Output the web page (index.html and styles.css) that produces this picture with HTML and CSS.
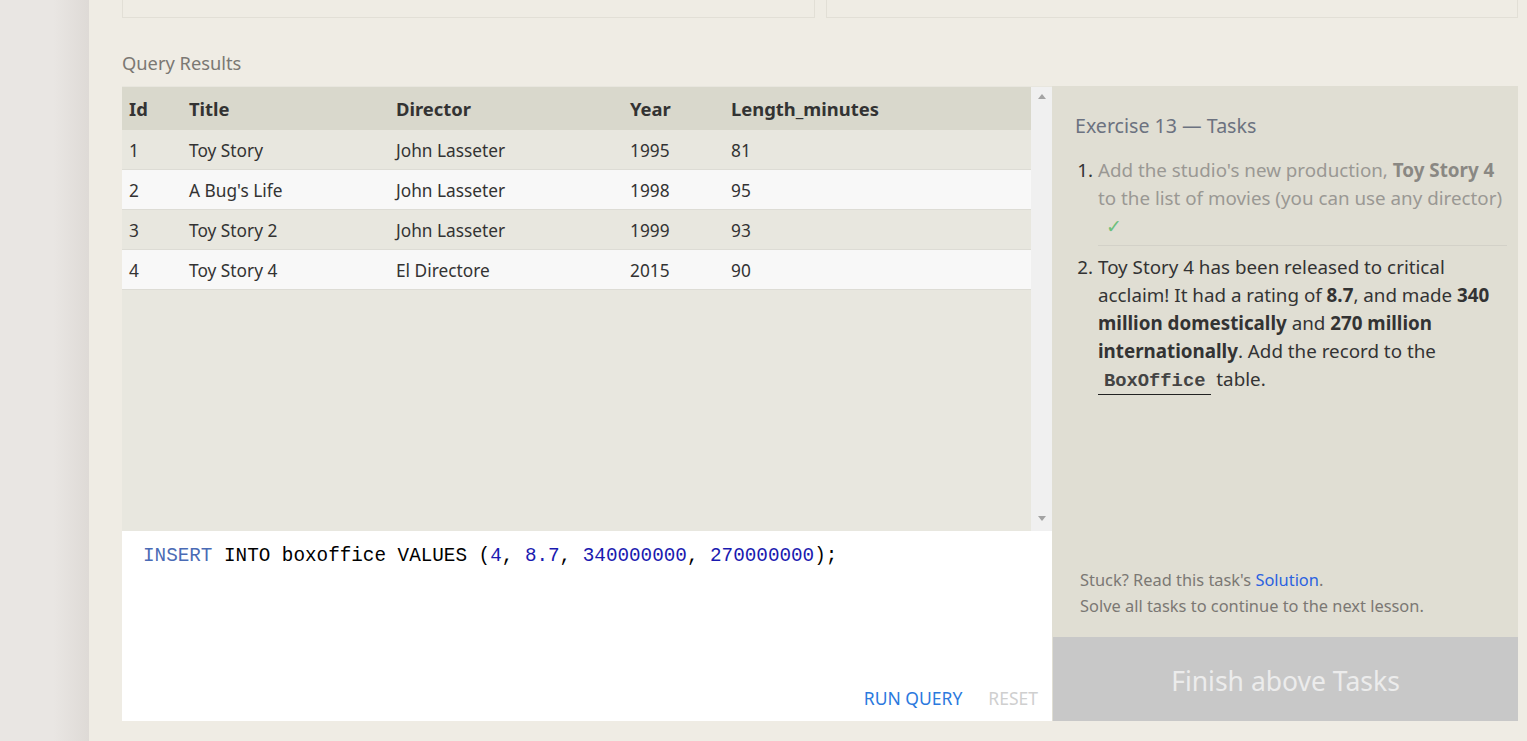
FILE: index.html
```html
<!DOCTYPE html>
<html>
<head>
<meta charset="utf-8">
<link rel="stylesheet" href="styles.css">
</head>
<body>
<div class="gutter"></div>
<div class="main">
  <div class="top-boxes">
    <div class="top-box"></div>
    <div class="top-box"></div>
  </div>
  <div class="section-title">Query Results</div>
  <div class="workspace">
    <div class="left-col">
      <div class="results">
        <div class="table-wrap">
          <table class="results-table">
            <thead>
              <tr><th class="c-id">Id</th><th class="c-title">Title</th><th class="c-dir">Director</th><th class="c-year">Year</th><th>Length_minutes</th></tr>
            </thead>
            <tbody>
              <tr><td>1</td><td>Toy Story</td><td>John Lasseter</td><td>1995</td><td>81</td></tr>
              <tr><td>2</td><td>A Bug's Life</td><td>John Lasseter</td><td>1998</td><td>95</td></tr>
              <tr><td>3</td><td>Toy Story 2</td><td>John Lasseter</td><td>1999</td><td>93</td></tr>
              <tr><td>4</td><td>Toy Story 4</td><td>El Directore</td><td>2015</td><td>90</td></tr>
            </tbody>
          </table>
        </div>
        <div class="scrollbar">
          <span class="arrow up"></span>
          <span class="arrow down"></span>
        </div>
      </div>
      <div class="editor">
        <div class="code"><span class="kw">INSERT</span> INTO boxoffice VALUES (<span class="num">4</span>, <span class="num">8.7</span>, <span class="num">340000000</span>, <span class="num">270000000</span>);</div>
        <div class="editor-actions">
          <span class="btn run">RUN QUERY</span>
          <span class="btn reset">RESET</span>
        </div>
      </div>
    </div>
    <div class="tasks">
      <div class="tasks-body">
        <h2 class="tasks-title">Exercise 13 — Tasks</h2>
        <ol class="task-list">
          <li class="task done">Add the studio's new production, <b>Toy Story 4</b> to the list of movies (you can use any director) <span class="check">✓</span></li>
          <li class="task">Toy Story 4 has been released to critical acclaim! It had a rating of <b>8.7</b>, and made <b>340 million domestically</b> and <b>270 million internationally</b>. Add the record to the <code>BoxOffice</code> table.</li>
        </ol>
        <div class="help">
          <div>Stuck? Read this task's <a class="link">Solution</a>.</div>
          <div>Solve all tasks to continue to the next lesson.</div>
        </div>
      </div>
      <div class="finish">Finish above Tasks</div>
    </div>
  </div>
</div>
</body>
</html>
```

FILE: styles.css
```css
html, body {
  margin: 0;
  padding: 0;
  height: 100%;
}
body {
  display: flex;
  background: #efece4;
  font-family: "Noto Sans", "Open Sans", sans-serif;
  color: #333;
  overflow: hidden;
}
.gutter {
  width: 89px;
  flex: none;
  background: linear-gradient(to right, #e9e6e3 0, #e9e6e3 60%, #dedad6 100%);
}
.main {
  flex: 1;
  padding: 0 9px 0 33px;
  display: flex;
  flex-direction: column;
}
.top-boxes {
  display: grid;
  grid-template-columns: 693px 1fr;
  gap: 11px;
}
.top-box {
  height: 17px;
  border: 1px solid #e2dfd6;
  border-top: none;
}
.section-title {
  margin-top: 32px;
  font-size: 18.3px;
  line-height: 26px;
  color: #7b7873;
  height: 27px;
}
.workspace {
  margin-top: 9px;
  display: flex;
  height: 635px;
}
.left-col {
  width: 930px;
  display: flex;
  flex-direction: column;
}
.results {
  height: 444px;
  display: flex;
  background: #e8e7df;
  border-top: 1px solid #e8e6de;
}
.table-wrap {
  flex: 1;
}
.results-table {
  width: 100%;
  border-collapse: collapse;
  font-size: 17.3px;
}
.results-table th {
  text-align: left;
  background: #d9d8cc;
  height: 43px;
  padding: 0 7px;
  font-weight: bold;
  font-size: 18.4px;
  color: #333;
}
.results-table td {
  height: 37px;
  padding: 2px 7px 0;
  border-bottom: 1px solid #dddcd5;
  color: #333;
}
.results-table tbody tr:nth-child(odd) td {
  background: #e8e7df;
}
.results-table tbody tr:nth-child(even) td {
  background: #f8f8f8;
}
.c-id { width: 46px; }
.c-title { width: 193px; }
.c-dir { width: 220px; }
.c-year { width: 87px; }
.scrollbar {
  width: 21px;
  background: #f0f0f0;
  display: flex;
  flex-direction: column;
  justify-content: space-between;
  align-items: center;
  padding: 7px 0 10px;
  box-sizing: border-box;
}
.arrow {
  width: 0;
  height: 0;
  border-left: 4px solid transparent;
  border-right: 4px solid transparent;
}
.arrow.up { border-bottom: 5px solid #a3a3a3; }
.arrow.down { border-top: 5px solid #a3a3a3; }
.editor {
  flex: 1;
  background: #fff;
  display: flex;
  flex-direction: column;
  justify-content: space-between;
  padding: 13px 14px 11px 21px;
}
.code {
  font-family: "Liberation Mono", "DejaVu Sans Mono", monospace;
  font-size: 19.3px;
  line-height: 24px;
  color: #000;
}
.kw { color: #4a6bb5; }
.num { color: #1a1ab0; }
.editor-actions {
  display: flex;
  justify-content: flex-end;
  gap: 26px;
  font-size: 17.5px;
}
.btn.run { color: #2b79de; }
.btn.reset { color: #cfcfcf; }
.tasks {
  width: 466px;
  background: #e0ded3;
  display: flex;
  flex-direction: column;
}
.tasks-body {
  flex: 1;
  display: flex;
  flex-direction: column;
  padding: 25px 11px 0 23px;
}
.tasks-title {
  margin: 0;
  font-weight: normal;
  font-size: 19.6px;
  line-height: 30px;
  color: #6c7280;
}
.task-list {
  margin: 15px 0 0;
  padding-left: 23px;
  font-size: 18.8px;
  line-height: 28px;
}
.task.done {
  color: #9a9893;
  border-bottom: 1px solid #d3d1c8;
  padding-bottom: 5px;
  margin-bottom: 7px;
}
.task.done::marker { color: #333; }
.task.done b { color: #8a8883; }
.check {
  color: #6cc07c;
  display: inline-block;
  margin-left: 8px;
}
.task code {
  font-family: "Liberation Mono", "DejaVu Sans Mono", monospace;
  font-weight: bold;
  font-size: 18.8px;
  padding: 0 6px 2px;
  border-bottom: 1px solid #222;
  color: #444;
}
.help {
  margin-top: auto;
  padding: 0 0 18px 5px;
  font-size: 16.4px;
  line-height: 26px;
  color: #7b7873;
}
.link { color: #2b62e0; }
.finish {
  height: 84px;
  box-sizing: border-box;
  padding-top: 3px;
  margin-left: 1px;
  background: #c8c8c8;
  color: #ececec;
  font-size: 26.5px;
  display: flex;
  align-items: center;
  justify-content: center;
}
```
